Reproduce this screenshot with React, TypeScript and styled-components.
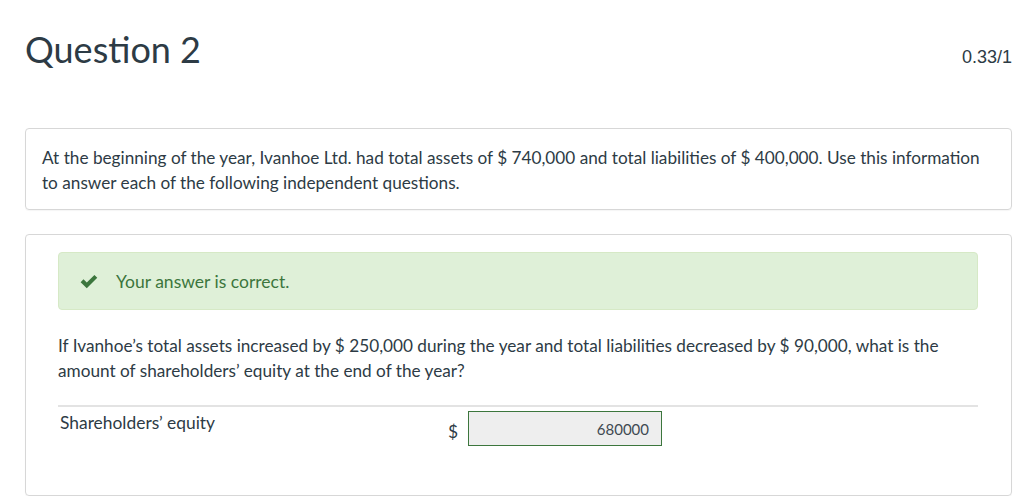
import React from 'react'
import { styled, createGlobalStyle } from 'styled-components'

const GlobalStyle = createGlobalStyle`
  html, body {
    margin: 0;
    padding: 0;
    background: #fff;
  }
  body {
    font-family: Lato, "Noto Sans", sans-serif;
    color: #2d3b45;
  }
`

const PageStyle = styled.main`
  padding: 0 12px 0 25px;
  display: flex;
  flex-direction: column;
  gap: 24px;
`

const HeaderStyle = styled.header`
  display: flex;
  justify-content: space-between;
  align-items: baseline;
  height: 104px;
  padding-top: 27px;
  box-sizing: border-box;
`

const TitleStyle = styled.h1`
  margin: 0;
  font-size: 36px;
  font-weight: 400;
  line-height: 44px;
`

const ScoreStyle = styled.span`
  font-family: "Liberation Sans", Arial, sans-serif;
  font-size: 18px;
  color: #2d3b45;
`

const CardStyle = styled.section<{ $pad: string }>`
  border: 1px solid #d7d7d7;
  border-radius: 4px;
  box-shadow: 0 1px 1px rgba(0, 0, 0, 0.04);
  padding: ${({ $pad }) => $pad};
`

const TextStyle = styled.p`
  margin: 0;
  font-size: 17.2px;
  line-height: 25px;
`

const AlertStyle = styled.div`
  display: flex;
  align-items: center;
  gap: 18px;
  height: 58px;
  box-sizing: border-box;
  padding: 0 21px;
  background: #dff0d8;
  border: 1px solid #d6e9c6;
  border-radius: 4px;
  color: #3c763d;
  font-size: 17.5px;
  margin-bottom: 23px;
`

const AnswerRowStyle = styled.div`
  display: flex;
  align-items: flex-start;
  border-top: 2px solid #e3e3e3;
  margin-top: 22px;
  padding-top: 4px;
  height: 84px;
`

const LabelStyle = styled.div`
  width: 388px;
  padding-left: 2px;
  padding-top: 2px;
  font-size: 17.4px;
  line-height: 20px;
`

const DollarStyle = styled.span`
  font-size: 17.4px;
  width: 20px;
  padding-top: 10px;
`

const InputStyle = styled.div`
  width: 194px;
  height: 35px;
  box-sizing: border-box;
  background: #eeeeee;
  border: 1px solid #3c763d;
  display: flex;
  align-items: center;
  justify-content: flex-end;
  padding-right: 12px;
  font-size: 15px;
  color: #3f4a52;
`

const CheckIcon: React.FC = () => (
  <svg width="18" height="15" viewBox="0 0 17 14">
    <path d="M0.6 7.6 L3.3 4.9 L6.4 8 L13.6 0.8 L16.3 3.5 L6.4 13.4 Z" fill="#3c763d" />
  </svg>
)

const App: React.FC = () => {
  return (
    <>
      <GlobalStyle />
      <PageStyle>
        <HeaderStyle>
          <TitleStyle>Question 2</TitleStyle>
          <ScoreStyle>0.33/1</ScoreStyle>
        </HeaderStyle>
        <CardStyle $pad="16px 16px 14px 16px">
          <TextStyle>
            At the beginning of the year, Ivanhoe Ltd. had total assets of $ 740,000 and total liabilities of $ 400,000. Use this information to answer each of the following independent questions.
          </TextStyle>
        </CardStyle>
        <CardStyle $pad="17px 33px 0 32px">
          <AlertStyle>
            <CheckIcon />
            <span>Your answer is correct.</span>
          </AlertStyle>
          <TextStyle>
            If Ivanhoe’s total assets increased by $ 250,000 during the year and total liabilities decreased by $ 90,000, what is the amount of shareholders’ equity at the end of the year?
          </TextStyle>
          <AnswerRowStyle>
            <LabelStyle>Shareholders’ equity</LabelStyle>
            <DollarStyle>$</DollarStyle>
            <InputStyle>680000</InputStyle>
          </AnswerRowStyle>
        </CardStyle>
      </PageStyle>
    </>
  )
}

export default App
